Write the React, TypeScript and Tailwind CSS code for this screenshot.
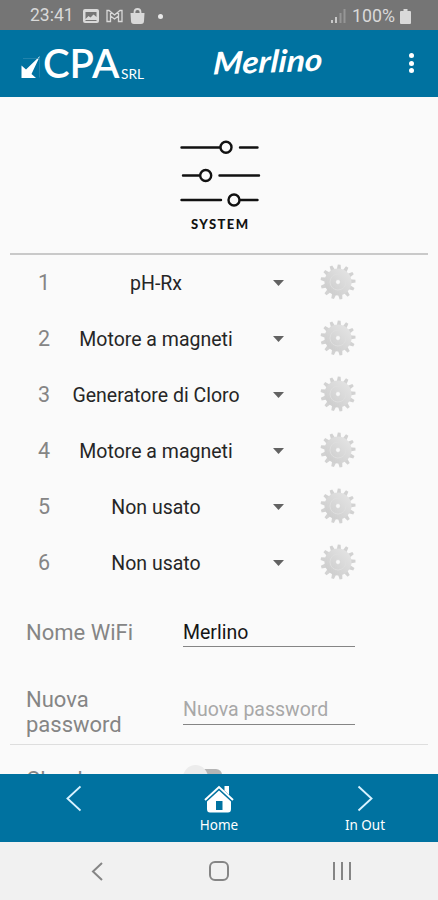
interface Channel {
  id: number;
  label: string;
}

const channels: Channel[] = [
  { id: 1, label: 'pH-Rx' },
  { id: 2, label: 'Motore a magneti' },
  { id: 3, label: 'Generatore di Cloro' },
  { id: 4, label: 'Motore a magneti' },
  { id: 5, label: 'Non usato' },
  { id: 6, label: 'Non usato' },
];

const teeth = Array.from({ length: 13 }, (_, i) => (i * 360) / 13);

function StatusBar() {
  return (
    <div className="flex h-[30px] items-center bg-[#757575] pt-[2px] pr-[27px] pl-[30px] text-[#d9d9d9]">
      <span className="w-[44px] text-[17.5px] leading-none">23:41</span>
      <svg className="ml-[9px]" width="16" height="14" viewBox="0 0 16 14">
        <rect width="16" height="14" rx="2" fill="currentColor" />
        <path d="M2.5 3h11v5l-3-2.500-3 3-2-1.500-3 3z" fill="#757575" />
        <path d="M2.500 11.500h11" stroke="#757575" />
      </svg>
      <svg className="ml-[7px]" width="17" height="14" viewBox="0 0 17 14" fill="none" stroke="currentColor" strokeWidth="1.3">
        <path d="M1 12.500v-11h2l5.500 4.500L14 1.500h2v11h-3.500V7l-4 3-4-3v5.500zM4.500 7V2.500M12.500 7V2.500" />
      </svg>
      <svg className="ml-[7px]" width="15" height="17" viewBox="0 0 15 17">
        <path d="M.5 5h14l-.5 8q0 3-3 3H4q-3 0-3-3z" fill="currentColor" />
        <path d="M4.500 6V4q0-3 3-3t3 3v2" fill="none" stroke="currentColor" strokeWidth="1.800" />
      </svg>
      <span className="ml-[13px] size-[5px] rounded-full bg-[#e8e8e8]" />
      <svg className="ml-auto" width="15" height="14" viewBox="0 0 15 14" strokeWidth="2">
        <path d="M1 14v-3M5 14V8" stroke="#c9c9c9" />
        <path d="M9.500 14V4M13.500 14V0" stroke="#969696" />
      </svg>
      <span className="ml-[6px] w-[44px] text-[17.800px] leading-none">100%</span>
      <svg className="ml-[4px]" width="11" height="15" viewBox="0 0 11 15" fill="currentColor">
        <path d="M3.500 0h4v2H10q1 0 1 1v11q0 1-1 1H1q-1 0-1-1V3q0-1 1-1h2.500z" />
      </svg>
    </div>
  );
}

function Header() {
  return (
    <header className="flex h-[67px] bg-[#0072a0] text-white">
      <svg className="ml-[20px]" width="130" height="67" viewBox="0 0 130 67" fill="currentColor">
        <path d="M1.500 35.500v12.500H16l-4.500-4L20 26 6 39.500z" />
        <path d="M3 28.500h16.500v19" fill="none" stroke="#2f8bb2" strokeWidth=".7" />
        <text y="48" fontSize="40" className="font-[Lato] font-semibold">
          <tspan x="23">C</tspan>
          <tspan x="49.500">P</tspan>
          <tspan x="72">A</tspan>
        </text>
        <text x="101" y="48.500" textLength="23" lengthAdjust="spacingAndGlyphs" fontSize="14" className="font-[Lato]">SRL</text>
      </svg>
      <svg className="ml-[62px]" width="118" height="67" viewBox="0 0 118 67" fill="currentColor">
        <text x="1" y="42.500" textLength="109" lengthAdjust="spacingAndGlyphs" fontSize="31" transform="translate(4 0) skewX(-6) rotate(-2 57 35)" className="font-[Lato] font-bold italic">
          Merlino
        </text>
      </svg>
      <div className="mt-[23px] ml-[79px] flex flex-col gap-[2.500px]">
        <span className="size-[5px] rounded-full bg-white" />
        <span className="size-[5px] rounded-full bg-white" />
        <span className="size-[5px] rounded-full bg-white" />
      </div>
    </header>
  );
}

function SystemIcon() {
  return (
    <svg className="mx-auto block" width="118" height="115" viewBox="0 0 118 115" fill="none" stroke="#111" strokeWidth="2.400" strokeLinecap="round">
      <path d="M21.500 22.500H60M80 22.500h17.500M23 50.500h16M59.500 50.500H99M21.500 75H61M80 75h17.500" />
      <circle cx="66" cy="22.300" r="5.500" />
      <circle cx="45.700" cy="50.500" r="5.500" />
      <circle cx="74" cy="75" r="5.500" />
      <text x="31" y="103.500" textLength="57" fontSize="13" fill="#111" stroke="none" className="font-[Lato] font-black">SYSTEM</text>
    </svg>
  );
}

function Gear() {
  return (
    <svg width="38" height="38" viewBox="-19 -19 38 38">
      <defs>
        <linearGradient id="gear" x1="0" y1="1" x2="1" y2="0">
          <stop offset="0" stopColor="#cacaca" />
          <stop offset=".5" stopColor="#d8d8d8" />
          <stop offset="1" stopColor="#e6e6e6" />
        </linearGradient>
      </defs>
      {teeth.map((angle) => (
        <path key={angle} d="M-2.200-12l.8-5.500h2.800l.8 5.500z" fill="#d2d2d2" transform={`rotate(${angle + 4})`} />
      ))}
      <circle r="13.500" fill="url(#gear)" />
      <circle r="8" fill="none" stroke="#dedede" />
      <circle r="2.400" fill="#f7f7f7" stroke="#cecece" strokeWidth=".5" />
    </svg>
  );
}

function ChannelRow({ id, label }: Channel) {
  return (
    <div className="flex h-[56px] items-center">
      <span className="mt-px ml-[34px] w-[20px] text-center text-[21.500px] text-[#858585]">{id}</span>
      <span className="mt-px ml-[2px] w-[200px] text-center text-[19.500px] whitespace-nowrap text-[#262626]">{label}</span>
      <svg className="ml-[17px]" width="11" height="6" viewBox="0 0 11 6">
        <path d="M0 0h11L5.500 6z" fill="#626262" />
      </svg>
      <div className="-mt-[2px] ml-[35px]">
        <Gear />
      </div>
    </div>
  );
}

function BottomBar() {
  return (
    <nav className="h-[68px] bg-[#0072a0] font-['Noto_Sans',sans-serif] text-[13.500px] leading-[16px] text-white">
      <div className="grid h-full grid-cols-3">
        <div className="flex justify-center pt-[11px]">
          <svg width="16" height="27" viewBox="0 0 16 27" fill="none" stroke="#d8f2ff" strokeWidth="1.900">
            <path d="M15.500 1.500L2.500 13.500l13 12" />
          </svg>
        </div>
        <div className="flex flex-col items-center pt-[11px]">
          <svg width="30" height="29" viewBox="0 0 30 29">
            <path d="M1 15L15 2l14 13" fill="none" stroke="#fff" strokeWidth="2" />
            <path d="M20.500 1H25v9l-4.500-4.500z" fill="#fff" />
            <path fillRule="evenodd" d="M15 5.500l12 11V24q0 3.500-3 3.500H6q-3 0-3-3.500v-7.500zM12 16v9h6.500v-9z" fill="#fff" />
          </svg>
          <span className="mt-[3px]">Home</span>
        </div>
        <div className="flex flex-col items-center pt-[11px]">
          <svg width="16" height="27" viewBox="0 0 16 27" fill="none" stroke="#d8f2ff" strokeWidth="1.900">
            <path d="M1.500 1.500l13 12-13 12" />
          </svg>
          <span className="mt-[5px]">In Out</span>
        </div>
      </div>
    </nav>
  );
}

function SystemNav() {
  return (
    <div className="flex h-[58px] items-center bg-[#f1f1f1] pl-[91px]">
      <svg width="12" height="19" viewBox="0 0 12 19" fill="none" stroke="#858585" strokeWidth="2">
        <path d="M11 1L2 9.500l9 8.500" />
      </svg>
      <div className="ml-[106px] size-[20px] rounded-[6px] border-2 border-[#858585]" />
      <div className="ml-[104px] flex h-[18px] w-[18px] justify-between">
        <span className="w-[2px] bg-[#858585]" />
        <span className="w-[2px] bg-[#858585]" />
        <span className="w-[2px] bg-[#858585]" />
      </div>
    </div>
  );
}

export default function App() {
  return (
    <div className="flex h-[900px] w-[438px] flex-col overflow-hidden bg-[#fafafa] font-[Roboto,sans-serif]">
      <StatusBar />
      <Header />
      <main className="h-[677px] overflow-hidden">
        <div className="h-[156px] pt-[28px]">
          <SystemIcon />
        </div>
        <div className="mx-[10px] h-[2px] bg-[#c9c9c9]" />
        {channels.map((channel) => (
          <ChannelRow key={channel.id} {...channel} />
        ))}

        {/* WiFi settings */}
        <div className="flex h-[56px] pt-[27px] pl-[26px]">
          <span className="w-[157px] pt-px text-[22px] leading-[28px] text-[#858585]">Nome WiFi</span>
          <span className="h-[29px] w-[172px] border-b-[1.500px] border-[#858585] pt-px text-[19.500px] leading-[27px] text-[#151515]">Merlino</span>
        </div>
        <div className="flex h-[97px] pt-[40px] pl-[26px]">
          <span className="w-[157px] pr-10 text-[22px] leading-[25px] text-[#858585]">Nuova password</span>
          <span className="mt-[9px] h-[29px] w-[172px] border-b border-[#858585] text-[19.500px] leading-[27px] text-[#a8a8a8]">Nuova password</span>
        </div>
        <div className="mx-[10px] h-px bg-[#dedede]" />

        {/* Cloud switch, scrolled half under the bottom bar */}
        <div className="flex pt-[20px] pl-[26px]">
          <span className="w-[157px] pt-[2px] text-[22px] leading-[25px] text-[#858585]">Cloud</span>
          <div className="-mt-[2px] flex items-center">
            <span className="z-10 size-[25px] rounded-full bg-[#ececec]" />
            <span className="-ml-[17px] h-[18px] w-[31px] rounded-[6px] bg-[#b5b5b5]" />
          </div>
        </div>
      </main>
      <BottomBar />
      <SystemNav />
    </div>
  );
}
